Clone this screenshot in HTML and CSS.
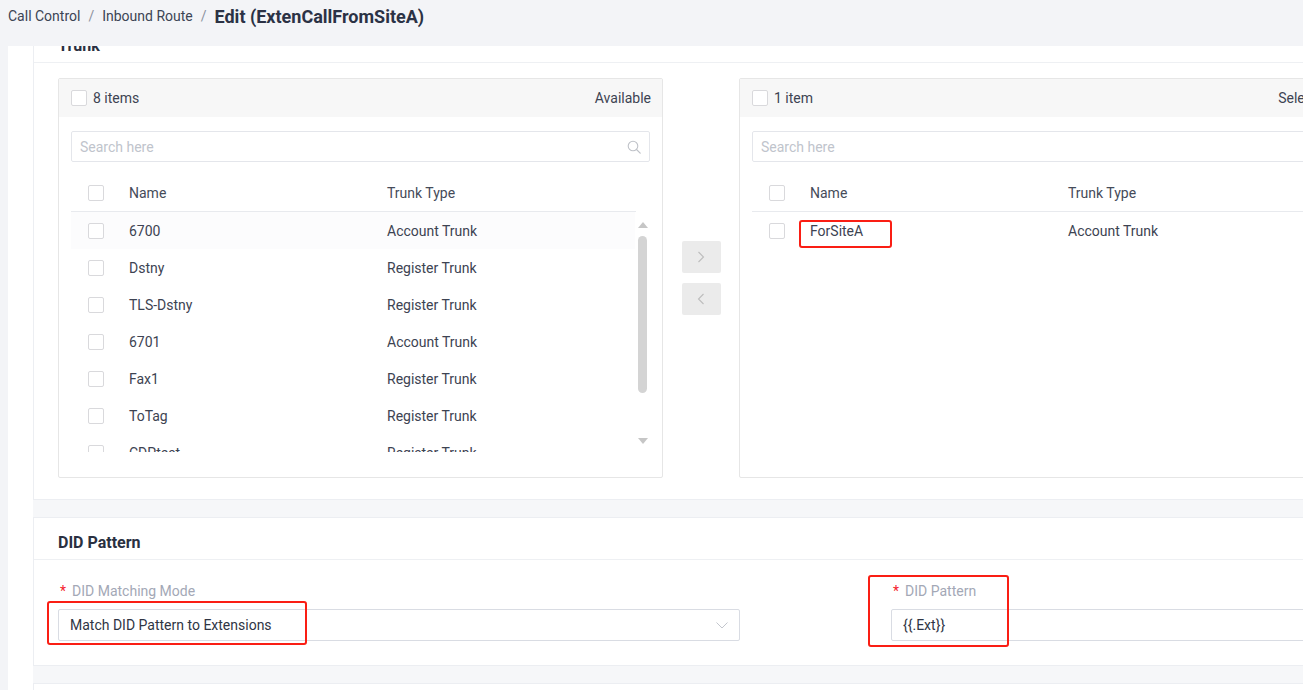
FILE: index.html
```html
<!DOCTYPE html>
<html lang="en">
<head>
<meta charset="utf-8">
<title>Edit Inbound Route</title>
<link rel="stylesheet" href="styles.css">
</head>
<body>
<div class="crumbs">
  <span class="crumb">Call Control</span><span class="sep">/</span><span class="crumb">Inbound Route</span><span class="sep">/</span><span class="crumb current">Edit (ExtenCallFromSiteA)</span>
</div>
<div class="main">
  <div class="cards">
    <section class="card">
      <div class="card-head">Trunk</div>
      <div class="card-body transfer">
        <div class="tlist">
          <div class="tl-head"><span class="cb"></span><span class="count">8 items</span><span class="tl-title">Available</span></div>
          <div class="tl-body">
            <div class="search"><span class="ph">Search here</span>
              <svg class="search-ico" width="14" height="14" viewBox="0 0 14 14"><circle cx="6" cy="6" r="4.8" fill="none" stroke="#bfc2c8" stroke-width="1.1"/><line x1="9.5" y1="9.5" x2="13.2" y2="13.2" stroke="#bfc2c8" stroke-width="1.2" stroke-linecap="round"/></svg>
            </div>
            <div class="table">
              <div class="trow thead narrow"><span class="c-cb"><span class="cb"></span></span><span class="c-name">Name</span><span class="c-type">Trunk Type</span></div>
              <div class="tbody">
                <div class="rows">
                  <div class="trow hover"><span class="c-cb"><span class="cb"></span></span><span class="c-name">6700</span><span class="c-type">Account Trunk</span></div>
                  <div class="trow"><span class="c-cb"><span class="cb"></span></span><span class="c-name">Dstny</span><span class="c-type">Register Trunk</span></div>
                  <div class="trow"><span class="c-cb"><span class="cb"></span></span><span class="c-name">TLS-Dstny</span><span class="c-type">Register Trunk</span></div>
                  <div class="trow"><span class="c-cb"><span class="cb"></span></span><span class="c-name">6701</span><span class="c-type">Account Trunk</span></div>
                  <div class="trow"><span class="c-cb"><span class="cb"></span></span><span class="c-name">Fax1</span><span class="c-type">Register Trunk</span></div>
                  <div class="trow"><span class="c-cb"><span class="cb"></span></span><span class="c-name">ToTag</span><span class="c-type">Register Trunk</span></div>
                  <div class="trow"><span class="c-cb"><span class="cb"></span></span><span class="c-name">CDPtest</span><span class="c-type">Register Trunk</span></div>
                </div>
                <div class="sbar">
                  <span class="arr-up"></span>
                  <span class="thumb"></span>
                  <span class="arr-down"></span>
                </div>
              </div>
            </div>
          </div>
        </div>
        <div class="ops">
          <button class="op-btn" type="button"><svg width="8" height="12" viewBox="0 0 8 12"><polyline points="1.5,1 6.5,6 1.5,11" fill="none" stroke="#bdbdbd" stroke-width="1.1"/></svg></button>
          <button class="op-btn" type="button"><svg width="8" height="12" viewBox="0 0 8 12"><polyline points="6.5,1 1.5,6 6.5,11" fill="none" stroke="#bdbdbd" stroke-width="1.1"/></svg></button>
        </div>
        <div class="tlist">
          <div class="tl-head"><span class="cb"></span><span class="count">1 item</span><span class="tl-title">Selected</span></div>
          <div class="tl-body">
            <div class="search"><span class="ph">Search here</span>
              <svg class="search-ico" width="14" height="14" viewBox="0 0 14 14"><circle cx="6" cy="6" r="4.8" fill="none" stroke="#bfc2c8" stroke-width="1.1"/><line x1="9.5" y1="9.5" x2="13.2" y2="13.2" stroke="#bfc2c8" stroke-width="1.2" stroke-linecap="round"/></svg>
            </div>
            <div class="table">
              <div class="trow thead"><span class="c-cb"><span class="cb"></span></span><span class="c-name">Name</span><span class="c-type">Trunk Type</span></div>
              <div class="rows">
                <div class="trow"><span class="c-cb"><span class="cb"></span></span><span class="c-name"><span class="hl">ForSiteA</span></span><span class="c-type">Account Trunk</span></div>
              </div>
            </div>
          </div>
        </div>
      </div>
    </section>

    <section class="card">
      <div class="card-head">DID Pattern</div>
      <div class="card-body did-body">
        <div class="field field-a">
          <div class="label"><span class="req">*</span>DID Matching Mode</div>
          <div class="control select"><span>Match DID Pattern to Extensions</span>
            <svg width="12" height="7" viewBox="0 0 12 7"><polyline points="0.5,0.5 6,6 11.5,0.5" fill="none" stroke="#c3c6cd" stroke-width="1"/></svg>
          </div>
          <span class="anno anno-select"></span>
        </div>
        <div class="field">
          <div class="label"><span class="req">*</span>DID Pattern</div>
          <div class="control input"><span>{{.Ext}}</span></div>
          <span class="anno anno-pattern"></span>
        </div>
      </div>
    </section>

    <section class="card card-next"></section>
  </div>
</div>
</body>
</html>
```

FILE: styles.css
```css
html, body {
  margin: 0;
  padding: 0;
}
body {
  width: 1303px;
  height: 690px;
  overflow: hidden;
  background: #f3f4f7;
  font-family: Roboto, "Liberation Sans", Arial, sans-serif;
  font-size: 14px;
  color: #3d4352;
}

/* breadcrumb */
.crumbs {
  height: 32px;
  display: flex;
  align-items: center;
  padding-left: 8px;
  margin-bottom: 14px;
  white-space: nowrap;
}
.crumb {
  color: #3c4454;
  font-size: 14px;
}
.sep {
  color: #8c929e;
  margin: 0 8px;
}
.current {
  font-size: 18px;
  font-weight: 700;
  color: #2b3245;
}

/* main area */
.main {
  margin-left: 8px;
  height: 644px;
  overflow: hidden;
  background: #ffffff;
  padding-left: 25px;
}
.cards {
  margin-top: -26px;
  width: 1760px;
  background: #f6f7f9;
}
.card {
  background: #ffffff;
  border: 1px solid #eceef2;
  margin-bottom: 17px;
}
.card-head {
  height: 42px;
  box-sizing: border-box;
  padding: 8px 0 0 24px;
  display: flex;
  align-items: center;
  font-size: 16px;
  font-weight: 700;
  color: #2a3041;
  border-bottom: 1px solid #eef0f3;
}
.card-next {
  height: 120px;
}

/* transfer */
.transfer {
  display: flex;
  padding: 15px 24px 21px;
}
.tlist {
  width: 605px;
  height: 400px;
  flex: none;
  box-sizing: border-box;
  border: 1px solid #e6e6e6;
  border-radius: 2px;
  display: flex;
  flex-direction: column;
  overflow: hidden;
}
.tl-head {
  height: 38px;
  flex: none;
  background: #f7f7f7;
  display: flex;
  align-items: center;
  padding: 0 11px 0 12px;
  white-space: nowrap;
}
.cb {
  display: inline-block;
  width: 16px;
  height: 16px;
  box-sizing: border-box;
  border: 1px solid #d9d9dc;
  border-radius: 2px;
  background: #fff;
  flex: none;
}
.count {
  margin-left: 6px;
  color: #3d4352;
}
.tl-title {
  margin-left: auto;
  color: #3d4352;
}
.tl-body {
  padding: 14px 12px 0;
}
.search {
  height: 31px;
  box-sizing: border-box;
  border: 1px solid #e4e6eb;
  border-radius: 2px;
  display: flex;
  align-items: center;
  justify-content: space-between;
  padding: 0 8px 0 8px;
}
.ph {
  color: #c0c4cc;
}
.table {
  margin-top: 13px;
}
.trow {
  display: flex;
  align-items: center;
  height: 37px;
  white-space: nowrap;
}
.thead {
  box-sizing: border-box;
  border-bottom: 1px solid #e8eaee;
  color: #454b59;
}
.thead.narrow {
  width: 565px;
}
.c-cb {
  width: 58px;
  box-sizing: border-box;
  padding-left: 17px;
  display: flex;
  flex: none;
}
.c-name {
  width: 258px;
  flex: none;
}
.tbody {
  display: flex;
  height: 240px;
}
.rows {
  width: 565px;
  overflow: hidden;
}
.trow.hover {
  background: #fcfcfd;
}
.sbar {
  width: 15px;
  display: flex;
  flex-direction: column;
  align-items: center;
}
.arr-up {
  margin-top: 10px;
  width: 0;
  height: 0;
  border-left: 5px solid transparent;
  border-right: 5px solid transparent;
  border-bottom: 6px solid #c6c6c6;
}
.thumb {
  margin-top: 8px;
  width: 9px;
  height: 157px;
  border-radius: 5px;
  background: #d4d4d4;
}
.arr-down {
  margin-top: 45px;
  width: 0;
  height: 0;
  border-left: 5px solid transparent;
  border-right: 5px solid transparent;
  border-top: 6px solid #c6c6c6;
}

.ops {
  width: 76px;
  flex: none;
  display: flex;
  flex-direction: column;
  align-items: center;
  padding-top: 163px;
  gap: 10px;
}
.op-btn {
  width: 39px;
  height: 32px;
  border: none;
  border-radius: 2px;
  background: #ebebeb;
  padding: 0;
  display: flex;
  align-items: center;
  justify-content: center;
}

/* highlight annotation */
.hl {
  position: relative;
  display: inline-block;
  line-height: 20px;
}
.hl::after {
  content: "";
  position: absolute;
  left: -11px;
  right: -29px;
  top: -1px;
  bottom: -7px;
  border: 2px solid #fa1e14;
  border-radius: 3px;
}

/* DID section */
.did-body {
  display: flex;
  padding: 21px 24px 24px;
}
.field {
  width: 682px;
  position: relative;
  flex: none;
}
.field-a {
  margin-right: 151px;
}
.label {
  height: 20px;
  line-height: 20px;
  display: flex;
  color: #a3a8b6;
  margin-bottom: 8px;
  white-space: nowrap;
}
.req {
  color: #f5222d;
  margin: 0 6px 0 2px;
}
.control {
  height: 32px;
  box-sizing: border-box;
  border: 1px solid #d9dce3;
  border-radius: 2px;
  display: flex;
  align-items: center;
  justify-content: space-between;
  padding: 0 11px;
  color: #2f3544;
  white-space: nowrap;
}
.anno {
  position: absolute;
  box-sizing: border-box;
  border: 2px solid #fa1e14;
  border-radius: 3px;
}
.anno-select {
  left: -11px;
  top: 20px;
  width: 260px;
  height: 44px;
}
.anno-pattern {
  left: -23px;
  top: -6px;
  width: 141px;
  height: 72px;
}
```
